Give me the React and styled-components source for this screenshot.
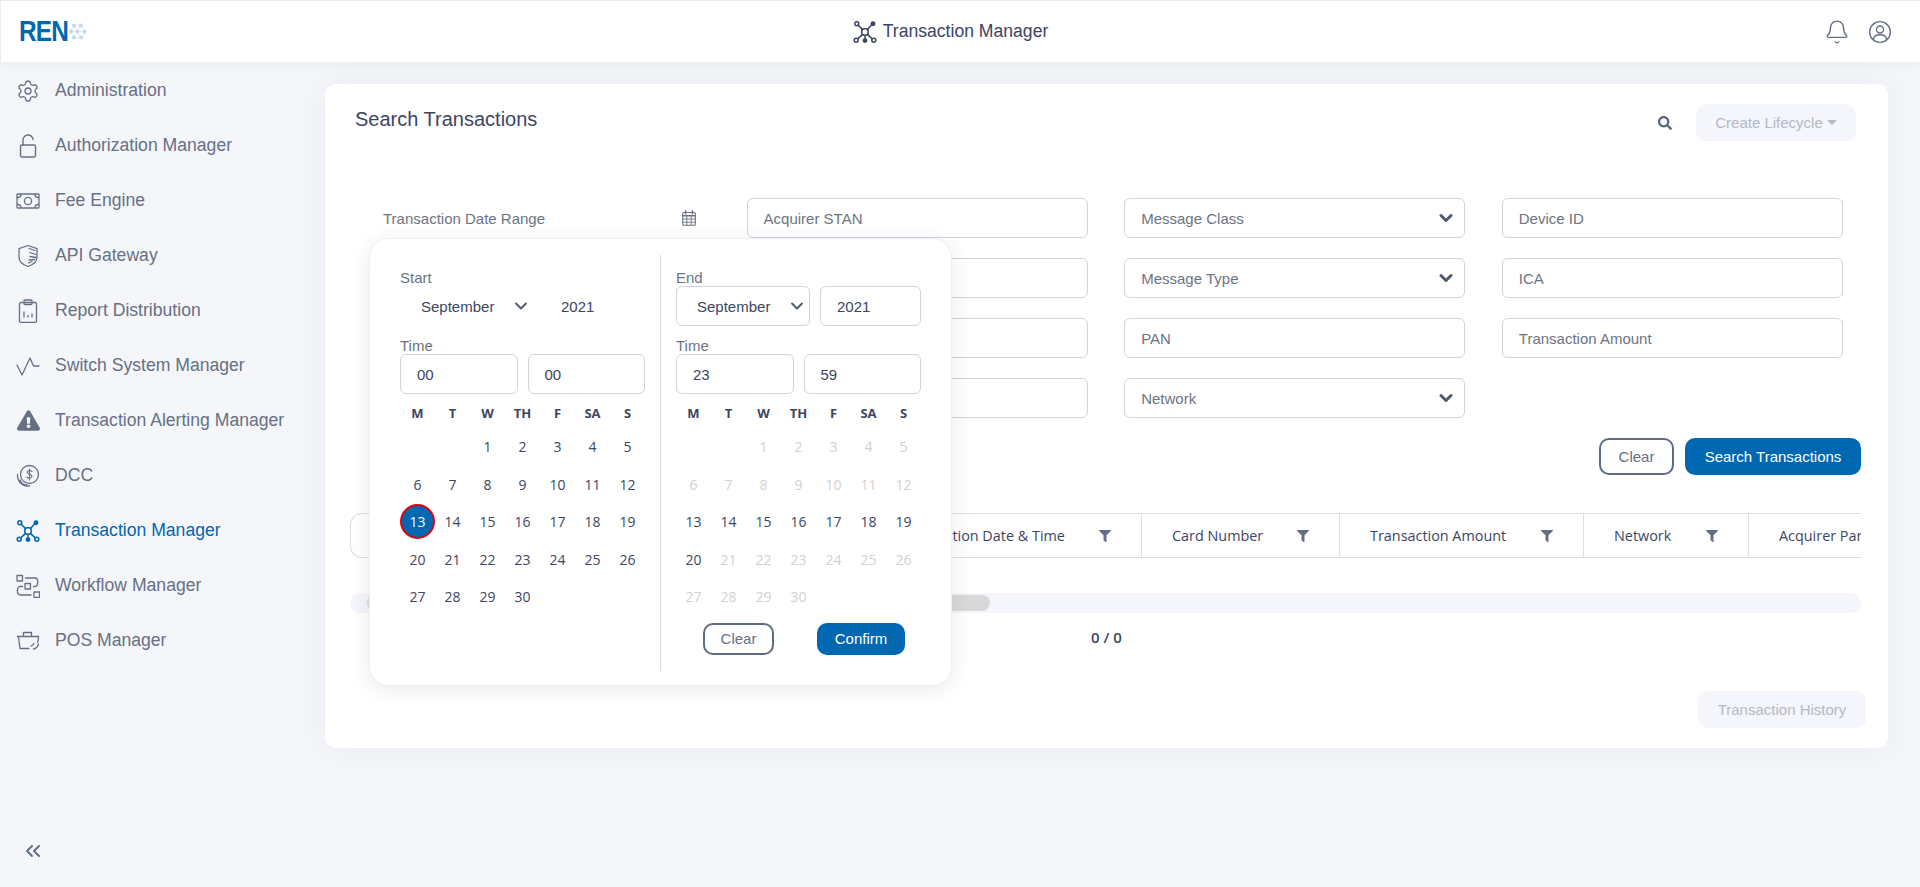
import React from 'react';
import styled, { createGlobalStyle } from 'styled-components';
import { Settings, Bell, ChevronsLeft } from 'lucide-react';
import { FaSearch, FaExclamationTriangle, FaFilter } from 'react-icons/fa';

const blue = '#0067b1';
const slate = '#667085';
const ink = '#3c4563';

const GlobalStyle = createGlobalStyle`
  html, body {
    margin: 0;
    padding: 0;
    height: 100%;
    overflow: hidden;
    background: #f5f6fa;
    font-family: "Liberation Sans", Arial, sans-serif;
    color: ${ink};
  }
  * { box-sizing: border-box; }
`;

const Page = styled.div`
  width: 1920px;
  height: 887px;
  display: flex;
  flex-direction: column;
`;

const Header = styled.header`
  height: 62px;
  flex: none;
  display: grid;
  grid-template-columns: 1fr auto 1fr;
  align-items: center;
  padding-right: 20px;
  background: #fff;
  border-top: 1px solid #ececec;
  border-left: 1px solid #ececec;
  box-shadow: 0 2px 12px rgba(30, 40, 80, 0.06);
  position: relative;
  z-index: 2;
`;

const Logo = styled.div`
  display: flex;
  align-items: center;
  padding-left: 18px;
`;

const LogoText = styled.span`
  font-size: 29px;
  font-weight: 700;
  line-height: 1;
  color: ${blue};
  letter-spacing: -1px;
  width: 50px;
  display: inline-block;
  transform: scaleX(0.84);
  transform-origin: left center;
`;

const HeaderTitle = styled.div`
  display: flex;
  align-items: center;
  gap: 6px;
  font-size: 17.6px;
  color: ${ink};
`;

const HeaderIcons = styled.div`
  display: flex;
  justify-content: flex-end;
  align-items: center;
  gap: 18px;
  padding-right: 8px;
  color: ${slate};
`;

const Body = styled.div`
  flex: 1;
  display: flex;
  min-height: 0;
`;

const Sidebar = styled.nav`
  width: 325px;
  flex: none;
  display: flex;
  flex-direction: column;
  padding: 1px 0 24px;
`;

const NavItem = styled.div`
  height: 55px;
  display: flex;
  align-items: center;
  gap: 15px;
  padding-left: 16px;
  font-size: 17.6px;
  color: ${(p) => (p.$active ? blue : slate)};
`;

const NavIcon = styled.span`
  width: 24px;
  height: 24px;
  display: flex;
  align-items: center;
  justify-content: center;
  flex: none;
`;

const Collapse = styled.div`
  margin-top: auto;
  padding-left: 21px;
  color: ${slate};
  display: flex;
`;

const Main = styled.main`
  flex: 1;
  min-width: 0;
  padding: 22px 32px 0 0;
`;

const Card = styled.section`
  height: 664px;
  background: #fff;
  border-radius: 10px;
  box-shadow: 0 0 30px rgba(40, 50, 90, 0.05);
`;

const CardHead = styled.div`
  display: flex;
  align-items: center;
  padding: 20px 32px 0 30px;
`;

const CardTitle = styled.h2`
  margin: 0 auto 7px 0;
  font-size: 20px;
  font-weight: 400;
  color: ${ink};
`;

const SearchToggle = styled.span`
  display: flex;
  margin-right: 24px;
  color: #5a647c;
`;

const Button = styled.button`
  height: ${(p) => p.$height || 37}px;
  width: ${(p) => p.$width}px;
  padding: 0;
  flex: none;
  font-family: inherit;
  font-size: 15px;
  border-radius: 10px;
  border: 0;
  ${(p) => p.$kind === 'primary' && `background: ${blue}; color: #fff;`}
  ${(p) => p.$kind === 'outline' && `background: #fff; color: ${slate}; border: 2px solid #5f6b85;`}
  ${(p) => p.$kind === 'disabled' && 'background: #f4f6fb; color: #b5b9c6;'}
`;

const Caret = styled.span`
  display: inline-block;
  margin-left: 4px;
  vertical-align: 3px;
  border-top: 5px solid #b5b9c6;
  border-left: 5px solid transparent;
  border-right: 5px solid transparent;
`;

const FilterGrid = styled.div`
  display: grid;
  grid-template-columns: repeat(4, 341px);
  grid-auto-rows: 40px;
  column-gap: 36.6px;
  row-gap: 20px;
  margin: 57px 45px 0 44px;
`;

const DateCell = styled.div`
  position: relative;
  display: flex;
  align-items: center;
  justify-content: space-between;
  padding: 0 14px;
  font-size: 15px;
  color: #6c7482;
`;

const Field = styled.div`
  display: flex;
  align-items: center;
  justify-content: space-between;
  height: 40px;
  padding: ${(p) => (p.$month ? '0 5px 0 20px' : '0 11px 0 16px')};
  font-size: 15px;
  color: ${(p) => p.$color || '#6c7482'};
  border: ${(p) => (p.$plain ? '1px solid transparent' : '1px solid #ced3dd')};
  border-radius: 6px;
  background: #fff;
`;

const ActionRow = styled.div`
  display: flex;
  justify-content: flex-end;
  gap: 11px;
  margin-top: 20px;
  padding-right: 27px;
`;

const TableHead = styled.div`
  display: flex;
  height: 45px;
  margin: 38px 27px 0 25px;
  overflow: hidden;
`;

const SelectCell = styled.div`
  width: 120px;
  flex: none;
  border: 1px solid #dedede;
  border-right: 0;
  border-radius: 12px 0 0 12px;
`;

const HeadCell = styled.div`
  width: ${(p) => p.$width}px;
  flex: none;
  display: flex;
  align-items: center;
  padding: 0 30px;
  font-family: "Open Sans", sans-serif;
  font-size: 14.4px;
  font-weight: 500;
  white-space: nowrap;
  color: ${ink};
  border-top: 1px solid #dedede;
  border-bottom: 1px solid #dedede;
  border-left: ${(p) => (p.$divider ? '1px solid #dedede' : '0')};
`;

const HeadLabel = styled.span`
  margin-right: auto;
`;

const FilterIcon = styled(FaFilter)`
  color: #636e86;
  flex: none;
`;

const ScrollTrack = styled.div`
  display: flex;
  align-items: center;
  height: 20px;
  margin: 35px 27px 0 25px;
  padding-left: 17px;
  background: #f4f6fb;
  border-radius: 10px;
`;

const ScrollThumb = styled.div`
  width: 623px;
  height: 16px;
  background: #d9d9d9;
  border-radius: 8px;
`;

const Pager = styled.div`
  margin-top: 14px;
  text-align: center;
  font-family: "Open Sans", sans-serif;
  font-size: 15px;
  font-weight: 600;
  line-height: 20px;
  color: ${ink};
`;

const HistoryRow = styled.div`
  display: flex;
  justify-content: flex-end;
  margin-top: 44px;
  padding-right: 22px;
`;

const Popup = styled.div`
  position: absolute;
  left: 0;
  top: 40px;
  z-index: 5;
  width: 583px;
  height: 448px;
  display: flex;
  align-items: flex-start;
  padding: 16px 0 0 30px;
  background: #fff;
  border: 1px solid #eef0f4;
  border-radius: 20px;
  box-shadow: 0 4px 20px rgba(40, 50, 90, 0.1);
`;

const Pane = styled.div`
  width: ${(p) => (p.$first ? 261 : 245)}px;
  height: 416px;
  flex: none;
  padding-right: ${(p) => (p.$first ? 16 : 0)}px;
  margin-left: ${(p) => (p.$first ? 0 : 15)}px;
  border-right: ${(p) => (p.$first ? '1px solid #d8d8d8' : '0')};
`;

const PaneLabel = styled.div`
  height: 17px;
  margin-top: ${(p) => p.$top}px;
  line-height: 17px;
  font-size: 15px;
  color: #6c7482;
`;

const MonthRow = styled.div`
  display: grid;
  grid-template-columns: 134px 101px;
  column-gap: 10px;
`;

const TimeRow = styled.div`
  display: grid;
  grid-template-columns: 117.5px 117.5px;
  column-gap: 10px;
`;

const WeekRow = styled.div`
  display: grid;
  grid-template-columns: repeat(7, 35px);
  height: 20px;
  margin-top: 9px;
`;

const WeekDay = styled.span`
  text-align: center;
  font-family: "Open Sans", sans-serif;
  font-size: 13px;
  font-weight: 700;
  line-height: 20px;
  color: ${ink};
`;

const DayGrid = styled.div`
  display: grid;
  grid-template-columns: repeat(7, 35px);
  grid-auto-rows: 37.5px;
  margin-top: 5px;
`;

const Day = styled.span`
  display: flex;
  align-items: center;
  justify-content: center;
  font-family: "Open Sans", sans-serif;
  font-size: 14px;
  color: ${(p) => (p.$muted ? '#d2d0d0' : ink)};
  ${(p) =>
    p.$selected &&
    `
    color: #fff;
    background: ${blue};
    border: 2px solid #e8000b;
    border-radius: 50%;
    height: 35px;
    align-self: center;
  `}
`;

const PopupActions = styled.div`
  display: flex;
  gap: 43px;
  margin-top: 7px;
  padding-left: 27px;
`;

const stroke = { fill: 'none', stroke: 'currentColor', strokeLinecap: 'round', strokeLinejoin: 'round' };

const NetworkIcon = ({ size = 24 }) => (
  <svg width={size} height={size} viewBox="0 0 24 24" {...stroke} strokeWidth="1.5">
    <path d="M5 5l4.6 4.6M18.6 5L14.4 9.6M5 18.6l4.6-4.2M19 18.6l-4.6-4.2M12 15.2V19" />
    <rect x="8.8" y="8.8" width="6.4" height="6.4" rx="2.4" />
    <circle cx="3.8" cy="3.8" r="2" />
    <circle cx="20" cy="3.8" r="1.7" fill="currentColor" />
    <circle cx="3.2" cy="20.2" r="2" />
    <circle cx="12" cy="20.6" r="1.7" fill="currentColor" />
    <circle cx="20.8" cy="20.2" r="2" />
  </svg>
);

const OpenLockIcon = () => (
  <svg width="24" height="24" viewBox="0 0 24 24" {...stroke} strokeWidth="1.4">
    <rect x="4.5" y="11" width="15" height="12" rx="1.6" />
    <path d="M7 11V6.500a5 5 0 0 1 10-1" />
  </svg>
);

const CashIcon = () => (
  <svg width="24" height="24" viewBox="0 0 24 24" {...stroke} strokeWidth="1.3">
    <rect x="1" y="5" width="22" height="14" rx="0.8" />
    <circle cx="12" cy="12" r="3.6" />
    <path d="M1.5 8.5C3.5 8.5 5 7.2 5 5.4M22.5 8.5C20.5 8.5 19 7.2 19 5.4M1.5 15.5C3.5 15.5 5 16.8 5 18.6M22.5 15.5C20.5 15.5 19 16.8 19 18.6" />
  </svg>
);

const ShieldIcon = () => (
  <svg width="24" height="24" viewBox="0 0 24 24" {...stroke} strokeWidth="1.3">
    <path d="M12 1.5l9 3.2v8.6c0 4.6-4 7.6-9 9.2-5-1.6-9-4.6-9-9.2V4.7z" />
    <path d="M13 4.5l6 2M14 8.5l6 2M14 12.5l6 1M13 16l5.500-.5M12.500 19l3.500-1.500" />
  </svg>
);

const ReportIcon = () => (
  <svg width="24" height="24" viewBox="0 0 24 24" {...stroke} strokeWidth="1.3">
    <rect x="3.500" y="3.500" width="17" height="20" rx="1.500" />
    <rect x="8" y="1" width="8" height="4.500" rx="1" />
    <path d="M8 18v-5M12 18v-1.500M16 18v-3" />
  </svg>
);

const PulseIcon = () => (
  <svg width="24" height="24" viewBox="0 0 24 24" {...stroke} strokeWidth="1.3">
    <path d="M1 11l5 10 8-17 3.500 8H23" />
  </svg>
);

const CoinIcon = () => (
  <svg width="24" height="24" viewBox="0 0 24 24" {...stroke} strokeWidth="1.3">
    <circle cx="13.500" cy="10.500" r="9" />
    <path d="M1.500 10.500c-.5 6.500 5 12.500 12 11.500M4 16c1 3 4 5 7 5" />
    <path d="M16 7.500c-.7-1-3.600-1.600-4.600 0-.8 1.600 1 2.400 2.200 2.800 1.400.5 3 1.400 2 3-1 1.400-3.800 1-4.800-.2M13.500 5v11" strokeWidth="1.100" />
  </svg>
);

const FlowIcon = () => (
  <svg width="24" height="24" viewBox="0 0 24 24" {...stroke} strokeWidth="1.300">
    <rect x="1" y="1.500" width="5.500" height="5.500" />
    <rect x="9" y="9.500" width="5.500" height="5.500" />
    <rect x="18" y="18" width="5.500" height="5.500" />
    <path d="M9.500 4h10c3 0 3 7.500 0 8.500h-2M6.500 12.500H4c-3.500 0-3.500 8 0 8.500h11" />
  </svg>
);

const PosIcon = () => (
  <svg width="24" height="24" viewBox="0 0 24 24" {...stroke} strokeWidth="1.300">
    <path d="M7.500 7V3.500h8V7M1.500 7.500h21c0 3-.3 4.500-1 6M2.500 8l1.500 11.500h9" />
    <path d="M22.500 15c-.5 2.500-2 4.300-5 5M18 14.500c-.5 1-1.500 2-3 2.500" />
  </svg>
);

const UserIcon = () => (
  <svg width="24" height="24" viewBox="0 0 24 24" {...stroke} strokeWidth="1.400">
    <circle cx="12" cy="12" r="10.400" />
    <circle cx="12" cy="9.500" r="3.500" />
    <path d="M5.300 19.500c.5-3 3-4.800 6.700-4.800s6.200 1.800 6.700 4.800" />
  </svg>
);

const CalendarIcon = () => (
  <svg width="14" height="16" viewBox="0 0 14 16" {...stroke} strokeWidth="1.100">
    <rect x="0.700" y="2.500" width="12.600" height="12.800" rx="1" />
    <path d="M3.500 0.800v3M10.500 0.800v3M0.700 5.800h12.600" strokeWidth="1.500" />
    <path d="M0.700 9h12.600M0.700 12.200h12.600M4.800 5.800v9.500M9.200 5.800v9.500" strokeWidth="0.900" />
  </svg>
);

const ChevronIcon = ({ strokeWidth = 3 }) => (
  <svg width="14" height="10" viewBox="0 0 14 10" fill="none" stroke="#505a72" strokeWidth={strokeWidth} strokeLinecap="round" strokeLinejoin="round">
    <path d="M2 2.500l5 5 5-5" />
  </svg>
);

const LogoDots = () => (
  <svg width="18" height="17" viewBox="0 0 18 17" fill="#c3d3ec" stroke="#d9e3f3" strokeWidth="0.700">
    <path d="M5 2h7l5 6.500-5 6.500H5L1 8.500z" fill="none" />
    <path d="M5 2l7 13M12 2L5 15M1 8.500h16" fill="none" />
    <circle cx="5" cy="2.500" r="1.800" />
    <circle cx="12" cy="2.500" r="1.800" />
    <circle cx="2" cy="8.500" r="1.800" />
    <circle cx="8.500" cy="8.500" r="1.800" />
    <circle cx="15.500" cy="8.500" r="1.800" />
    <circle cx="5" cy="14.500" r="1.800" />
    <circle cx="12" cy="14.500" r="1.800" />
  </svg>
);

const navItems = [
  { label: 'Administration', icon: <Settings size={24} strokeWidth={1.3} /> },
  { label: 'Authorization Manager', icon: <OpenLockIcon /> },
  { label: 'Fee Engine', icon: <CashIcon /> },
  { label: 'API Gateway', icon: <ShieldIcon /> },
  { label: 'Report Distribution', icon: <ReportIcon /> },
  { label: 'Switch System Manager', icon: <PulseIcon /> },
  { label: 'Transaction Alerting Manager', icon: <FaExclamationTriangle size={23} /> },
  { label: 'DCC', icon: <CoinIcon /> },
  { label: 'Transaction Manager', icon: <NetworkIcon />, active: true },
  { label: 'Workflow Manager', icon: <FlowIcon /> },
  { label: 'POS Manager', icon: <PosIcon /> },
];

const weekDays = ['M', 'T', 'W', 'TH', 'F', 'SA', 'S'];
const days = Array.from({ length: 30 }, (_, i) => i + 1);

function Calendar({ isEnabled, selected }) {
  return (
    <>
      <WeekRow>
        {weekDays.map((d) => <WeekDay key={d}>{d}</WeekDay>)}
      </WeekRow>
      <DayGrid>
        <span />
        <span />
        {days.map((d) => (
          <Day key={d} $muted={!isEnabled(d)} $selected={d === selected}>{d}</Day>
        ))}
      </DayGrid>
    </>
  );
}

function DatePopup() {
  return (
    <Popup>
      <Pane $first>
        <PaneLabel $top={14}>Start</PaneLabel>
        <MonthRow>
          <Field $plain $month $color={ink}>
            <span>September</span>
            <ChevronIcon strokeWidth={2} />
          </Field>
          <Field $plain $color={ink}>2021</Field>
        </MonthRow>
        <PaneLabel $top={11}>Time</PaneLabel>
        <TimeRow>
          <Field $color={ink}>00</Field>
          <Field $color={ink}>00</Field>
        </TimeRow>
        <Calendar isEnabled={() => true} selected={13} />
      </Pane>
      <Pane>
        <PaneLabel $top={14}>End</PaneLabel>
        <MonthRow>
          <Field $month $color={ink}>
            <span>September</span>
            <ChevronIcon strokeWidth={2} />
          </Field>
          <Field $color={ink}>2021</Field>
        </MonthRow>
        <PaneLabel $top={11}>Time</PaneLabel>
        <TimeRow>
          <Field $color={ink}>23</Field>
          <Field $color={ink}>59</Field>
        </TimeRow>
        <Calendar isEnabled={(d) => d >= 13 && d <= 20} />
        <PopupActions>
          <Button $kind="outline" $width={71} $height={32}>Clear</Button>
          <Button $kind="primary" $width={88} $height={32}>Confirm</Button>
        </PopupActions>
      </Pane>
    </Popup>
  );
}

export default function App() {
  return (
    <Page>
      <GlobalStyle />
      <Header>
        <Logo>
          <LogoText>REN</LogoText>
          <LogoDots />
        </Logo>
        <HeaderTitle>
          <NetworkIcon />
          Transaction Manager
        </HeaderTitle>
        <HeaderIcons>
          <Bell size={26} strokeWidth={1.3} />
          <UserIcon />
        </HeaderIcons>
      </Header>
      <Body>
        <Sidebar>
          {navItems.map((item) => (
            <NavItem key={item.label} $active={item.active}>
              <NavIcon>{item.icon}</NavIcon>
              {item.label}
            </NavItem>
          ))}
          <Collapse><ChevronsLeft size={24} strokeWidth={2} /></Collapse>
        </Sidebar>
        <Main>
          <Card>
            <CardHead>
              <CardTitle>Search Transactions</CardTitle>
              <SearchToggle><FaSearch size={14} /></SearchToggle>
              <Button $kind="disabled" $width={160}>Create Lifecycle<Caret /></Button>
            </CardHead>
            <FilterGrid>
              <DateCell>
                Transaction Date Range
                <CalendarIcon />
                <DatePopup />
              </DateCell>
              <Field>Acquirer STAN</Field>
              <Field>Message Class<ChevronIcon /></Field>
              <Field>Device ID</Field>
              <span />
              <Field />
              <Field>Message Type<ChevronIcon /></Field>
              <Field>ICA</Field>
              <span />
              <Field />
              <Field>PAN</Field>
              <Field>Transaction Amount</Field>
              <span />
              <Field />
              <Field>Network<ChevronIcon /></Field>
            </FilterGrid>
            <ActionRow>
              <Button $kind="outline" $width={75}>Clear</Button>
              <Button $kind="primary" $width={176}>Search Transactions</Button>
            </ActionRow>
            <TableHead>
              <SelectCell />
              <HeadCell $width={400} />
              <HeadCell $width={271}><HeadLabel>Transaction Date &amp; Time</HeadLabel><FilterIcon size={12} /></HeadCell>
              <HeadCell $width={198} $divider><HeadLabel>Card Number</HeadLabel><FilterIcon size={12} /></HeadCell>
              <HeadCell $width={244} $divider><HeadLabel>Transaction Amount</HeadLabel><FilterIcon size={12} /></HeadCell>
              <HeadCell $width={165} $divider><HeadLabel>Network</HeadLabel><FilterIcon size={12} /></HeadCell>
              <HeadCell $width={220} $divider><HeadLabel>Acquirer Participant</HeadLabel></HeadCell>
            </TableHead>
            <ScrollTrack><ScrollThumb /></ScrollTrack>
            <Pager>0 / 0</Pager>
            <HistoryRow>
              <Button $kind="disabled" $width={168}>Transaction History</Button>
            </HistoryRow>
          </Card>
        </Main>
      </Body>
    </Page>
  );
}
